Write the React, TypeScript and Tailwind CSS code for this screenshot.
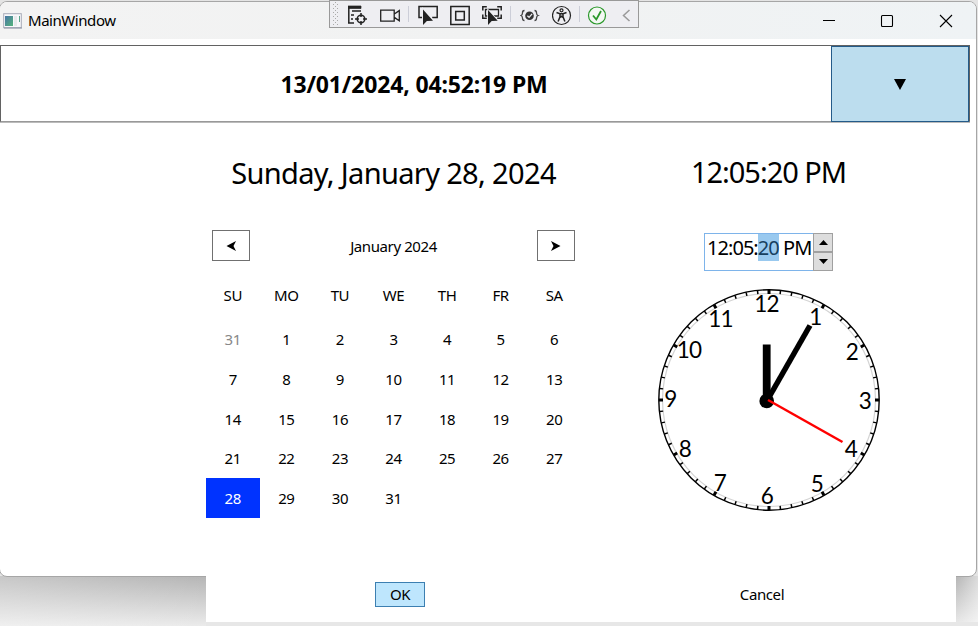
import React from "react";

const weekdays = ["SU", "MO", "TU", "WE", "TH", "FR", "SA"];
const days = [31, ...Array.from({ length: 31 }, (_, i) => i + 1)];

const numerals: [string, number, number][] = [
  ["12", 108.5, 23], ["1", 157.5, 36], ["2", 194, 71], ["3", 207, 119.5], ["4", 193, 167.5], ["5", 159, 203],
  ["6", 109, 215], ["7", 62, 202], ["8", 27, 168], ["9", 12.5, 118], ["10", 31, 69], ["11", 62.5, 38],
];

function Toolbar() {
  return (
    <div className="absolute left-[329px] top-0 flex h-7 w-[310px] items-center border border-[#999] bg-[#eeeef2] pl-[3px]">
      <svg className="mr-[8px] h-6 w-2 shrink-0" viewBox="0 0 8 24" fill="#aaa">
        {[2, 6, 10, 14, 18, 22].map((y) => (
          <g key={y}>
            <rect x="0" y={y} width="1" height="1" />
            <rect x="4" y={y} width="1" height="1" />
            <rect x="2" y={y - 2} width="1" height="1" />
          </g>
        ))}
      </svg>
      <svg className="mr-3 ml-[-1px] h-6 w-5 shrink-0" viewBox="0 0 20 24" fill="none" stroke="#222" strokeWidth="1.5">
        <path d="M.8 4v17M0 21h6M4 9h9M3 13h3M3 17h2" />
        <path d="M0 4h13v2.500H0z" fill="#222" strokeWidth=".7" />
        <circle cx="13" cy="17" r="3.8" />
        <path d="M13 11v4M13 19v4M7 17h4M15 17h4" />
      </svg>
      <svg className="mr-2 h-6 w-5 shrink-0" viewBox="0 0 20 24" fill="none" stroke="#222" strokeWidth="1.3">
        <path d="M.7 8.200h13.500v11H.7zM14.300 12l5-3.400v10.200l-5-3.400" />
      </svg>
      <i className="mr-2 h-4 w-px shrink-0 bg-[#ccced8]" />
      <svg className="ml-px mr-3 h-6 w-5 shrink-0" viewBox="0 0 20 24">
        <path d="M5 15.500H1v-11h18.200v11h-5" fill="none" stroke="#222" strokeWidth="1.5" />
        <path d="M5 7.500v15.500l3.900-4 6.100-.3z" fill="#222" stroke="#eeeef2" strokeWidth="2" paintOrder="stroke" />
      </svg>
      <svg className="mr-3 h-6 w-5 shrink-0" viewBox="0 0 20 24" fill="none" stroke="#222" strokeWidth="1.5">
        <path d="M.8 4.500h18.400v18H.8zM5.700 9.500h8.600v8.400H5.700z" />
      </svg>
      <svg className="mr-2 h-6 w-5 shrink-0" viewBox="0 0 20 24">
        <path d="M.8 8.500V4.800h4M15.200 4.800h4v3.700M.8 12.500v3.700h4M19.200 12.500v3.700h-4" fill="none" stroke="#222" strokeWidth="1.5" />
        <path d="M3.500 7.500h13v6.500H3.500z" fill="none" stroke="#222" strokeWidth="1.3" />
        <path d="M6 8v15l3.700-4 6-.3z" fill="#222" stroke="#eeeef2" strokeWidth="1.6" paintOrder="stroke" />
      </svg>
      <i className="mr-[9px] h-4 w-px shrink-0 bg-[#ccced8]" />
      <svg className="mr-3 h-6 w-5 shrink-0" viewBox="0 0 20 24" fill="none" stroke="#444" strokeWidth="1.3">
        <path d="M4.500 8.500c-2 0-2 .8-2 2.300s0 2.200-1.500 2.700c1.500.5 1.500 1.200 1.500 2.700s0 2.300 2 2.300M14.500 8.500c2 0 2 .8 2 2.300s0 2.200 1.500 2.700c-1.500.5-1.500 1.200-1.500 2.700s0 2.300-2 2.300" />
        <circle cx="9.5" cy="13.7" r="4.3" fill="#333" stroke="none" />
        <path d="m7.400 13.700 1.700 1.700 3-3.600" stroke="#eeeef2" />
      </svg>
      <svg className="mr-[7px] h-6 w-5 shrink-0" viewBox="0 0 20 24" fill="none" stroke="#222" strokeWidth="1.2">
        <circle cx="9.5" cy="13.5" r="9" />
        <circle cx="9.500" cy="8.3" r="1.500" />
        <path d="M4.500 10.500 8 11.700v3.200l-1.900 4.600M14.500 10.500 11 11.700v3.200l1.900 4.600M8 11.700h3M8 15.500l1.500-1.200 1.500 1.200" strokeWidth="1.500" />
      </svg>
      <i className="mr-[7px] h-4 w-px shrink-0 bg-[#ccced8]" />
      <svg className="mr-[10px] h-6 w-5 shrink-0" viewBox="0 0 20 24" fill="none" stroke="#2b982b">
        <circle cx="10" cy="13.5" r="8.5" fill="#f4f8f4" strokeWidth="1.200" />
        <path d="m6 13.500 3.300 4 4.700-8.500" strokeWidth="1.800" />
      </svg>
      <svg className="h-6 w-5 shrink-0" viewBox="0 0 20 24" fill="none" stroke="#999" strokeWidth="1.500">
        <path d="m12.500 8-6 5.500 6 5.500" />
      </svg>
    </div>
  );
}

function Clock() {
  return (
    <svg className="mt-[18px] ml-[77px] h-[223px] w-[223px] shrink-0" viewBox="0 0 223 223">
      <circle cx="111" cy="111" r="106.500" fill="none" stroke="#d4d4d4" strokeWidth="1.200" />
      <circle cx="111" cy="111" r="110.200" fill="none" stroke="black" strokeWidth="1.400" />
      {Array.from({ length: 60 }, (_, i) => (
        <line
          key={i}
          x1="111"
          x2="111"
          y1="1"
          y2={i % 5 ? 4.6 : 5}
          stroke="black"
          strokeWidth={i % 5 ? 1.5 : 3}
          transform={`rotate(${i * 6} 111 111)`}
        />
      ))}
      <g className="font-['Lato',sans-serif] text-[22.500px] tracking-[-0.8px]" textAnchor="middle">
        {numerals.map(([n, x, y]) => (
          <text key={n} x={x} y={y}>{n}</text>
        ))}
      </g>
      <path d="M108.700 112V55.500" stroke="black" strokeWidth="7.800" />
      <path d="m110 110 42-73.500" stroke="black" strokeWidth="5.500" />
      <circle cx="108.700" cy="112" r="7.300" />
      <path d="m110 111 74.500 42" stroke="red" strokeWidth="2.500" />
    </svg>
  );
}

function Popup() {
  return (
    <div className="absolute left-[206px] top-[123px] flex h-[499px] w-[750px] flex-col bg-white text-[15px] leading-5 tracking-[-0.4px]">
      <div className="flex h-[395px]">
        <div className="w-[375px]">
          <div className="flex h-[107px] items-center justify-center pb-[7px] text-[29px] tracking-[-0.65px] whitespace-nowrap">
            Sunday, January 28, 2024
          </div>
          <div className="flex h-[31px] items-center justify-between px-[6px]">
            <button className="flex h-[31px] w-[38px] items-center justify-center border border-[#707070]">
              <svg className="h-3 w-3" viewBox="0 0 12 12"><path d="M1.500 6 11 1 8.500 6 11 11z" /></svg>
            </button>
            <span>January 2024</span>
            <button className="flex h-[31px] w-[38px] items-center justify-center border border-[#707070]">
              <svg className="h-3 w-3" viewBox="0 0 12 12"><path d="M10.500 6 1 1 3.500 6 1 11z" /></svg>
            </button>
          </div>
          <div className="grid h-[59px] grid-cols-7 items-center pt-[8px] text-center">
            {weekdays.map((d) => <span key={d}>{d}</span>)}
          </div>
          <div className="mt-[-0.4px] grid auto-rows-[39.6px] grid-cols-7">
            {days.map((d, i) => (
              <span
                key={i}
                className={`flex items-center justify-center ${i === 0 ? "text-[#888]" : i === 28 ? "bg-[#0033ff] text-white" : ""}`}
              >
                {d}
              </span>
            ))}
          </div>
        </div>
        <div className="flex w-[375px] flex-col">
          <div className="flex h-[110px] shrink-0 items-center justify-center pb-[13px] text-[29px] tracking-[-1.050px] whitespace-nowrap">
            12:05:20 PM
          </div>
          <div className="ml-[123px] flex h-[38px] w-[129px] shrink-0">
            <div className="flex w-[109px] shrink-0 items-start border border-r-0 border-[#7eb4ea] pl-[2px] text-[20px] leading-[27px] tracking-[-0.950px] whitespace-nowrap">
              12:05:<span className="bg-[#99c9ef] text-[#17405f]">20</span>&nbsp;PM
            </div>
            <div className="flex w-[20px] shrink-0 flex-col">
              <button className="flex h-[19px] items-center justify-center border border-[#a0a0a0] bg-[#ddd]">
                <svg className="h-[5px] w-[9px]" viewBox="0 0 9 5"><path d="M0 5 4.500 0 9 5z" /></svg>
              </button>
              <button className="flex h-[19px] items-center justify-center border border-[#a0a0a0] bg-[#ddd]">
                <svg className="h-[5px] w-[9px]" viewBox="0 0 9 5"><path d="M0 0 4.500 5 9 0z" /></svg>
              </button>
            </div>
          </div>
          <Clock />
        </div>
      </div>
      <div className="mt-[64px] flex pl-[169px]">
        <button className="h-[25px] w-[50px] border border-[#3c7fb1] bg-[#bee6fd] leading-[23px]">OK</button>
        <button className="ml-[305px] w-[64px] leading-[25px]">Cancel</button>
      </div>
    </div>
  );
}

export default function App() {
  return (
    <div className="relative h-[626px] w-[978px] overflow-hidden bg-[#e4e4e4] font-['Noto_Sans',sans-serif] text-black">
      <div className="absolute bottom-0 left-0 h-[50px] w-full bg-linear-to-b from-[#b5b5b5] to-[#ebebeb]" />
      <div className="absolute bottom-0 left-0 h-[50px] w-[206px] bg-linear-to-r from-white/25 to-transparent" />
      <div className="absolute right-0 bottom-0 h-[50px] w-[22px] bg-linear-to-r from-transparent to-white/50" />
      <div className="absolute right-0 bottom-0 h-1 w-[772px] bg-[#e7e7e7]" />
      <div className="absolute left-[-1px] top-px flex h-[576px] w-[978px] flex-col overflow-hidden rounded-lg border border-[#a6a6a6] bg-white">
        <div className="flex h-[37px] shrink-0 items-center bg-linear-to-r from-[#f3f3f3] via-[#f1f2f2] to-[#eff3f5]">
          <svg className="ml-[3px] h-4 w-5" viewBox="0 0 20 16">
            <defs>
              <linearGradient id="pane" x2="1" y2="1">
                <stop stopColor="#4775a5" />
                <stop offset="1" stopColor="#55b47c" />
              </linearGradient>
            </defs>
            <rect x=".7" y=".7" width="17.600" height="14" fill="#f8f8fb" stroke="#a7abb8" />
            <path d="M1 15h18" stroke="#8e94a5" />
            <rect x="2" y="3" width="8" height="10" fill="url(#pane)" />
            <path d="M11 3h3v10h-3z" fill="#e7eaec" />
            <path d="M16.500 3v6" stroke="#5ca58c" />
          </svg>
          <span className="ml-[5px] flex-1 text-[15px] tracking-[-0.450px]">MainWindow</span>
          <svg className="mr-[23px] h-4 w-[130px]" viewBox="0 0 130 16" fill="none" stroke="black" strokeWidth="1.100">
            <path d="M0 7.500h12" />
            <rect x="58.500" y="2.500" width="11" height="11" rx="1" />
            <path d="m117 2 12 12M129 2l-12 12" />
          </svg>
        </div>
        <div className="mt-[6px] flex h-[77px] w-[970px] shrink-0 border border-[#626262] border-b-[#999]">
          <div className="flex w-[830px] shrink-0 items-center justify-center pr-[4px] pt-[1px] text-[23px] font-bold tracking-[-0.150px]">
            13/01/2024, 04:52:19 PM
          </div>
          <button className="flex h-[76px] w-[138px] shrink-0 items-center justify-center border border-[#245b89] bg-[#bcddee]">
            <svg className="h-[11px] w-3" viewBox="0 0 12 11"><path d="M0 0h12L6 11z" /></svg>
          </button>
        </div>
        <div className="h-px w-[970px] bg-[#bbb]" />
      </div>
      <Toolbar />
      <Popup />
    </div>
  );
}
